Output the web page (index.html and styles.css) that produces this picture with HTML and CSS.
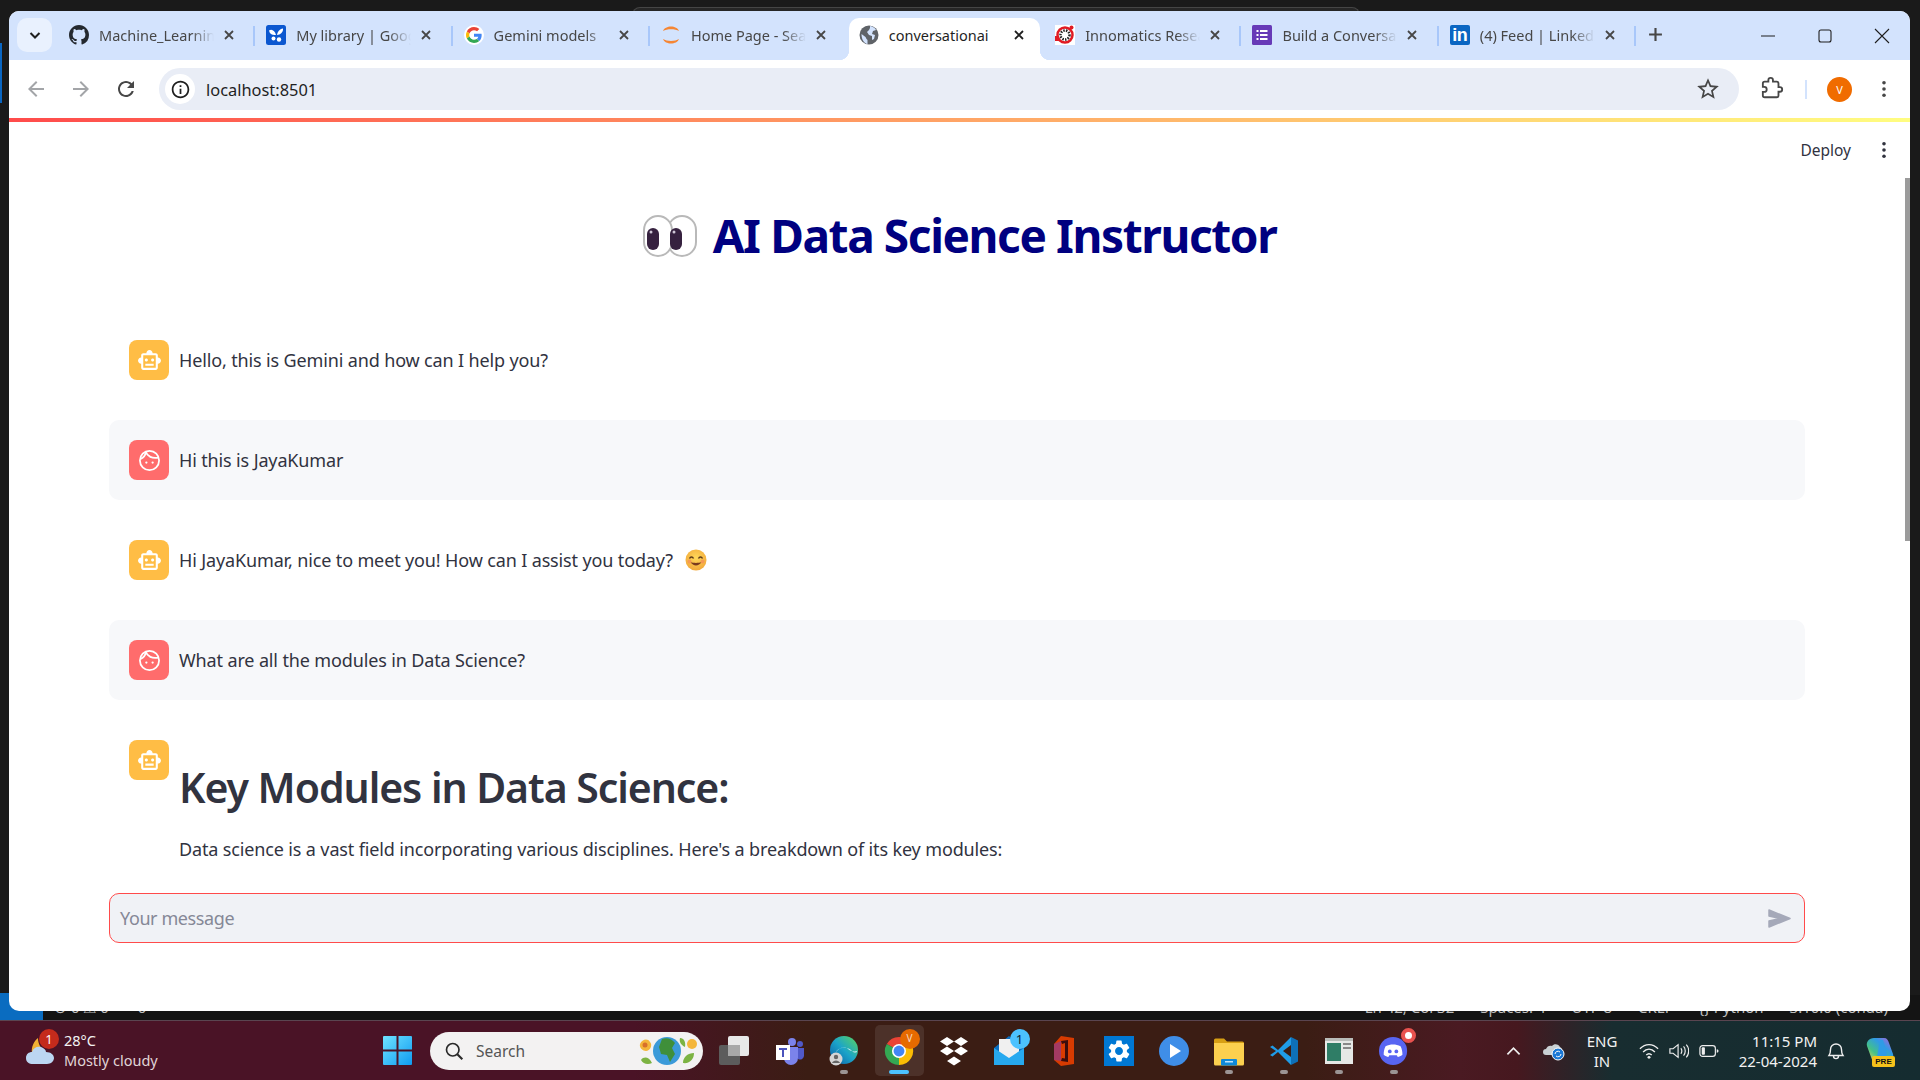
FILE: index.html
```html
<!DOCTYPE html>
<html lang="en">
<head>
<meta charset="utf-8">
<title>conversationai</title>
<link rel="stylesheet" href="styles.css">
</head>
<body>
<div class="desktop">
  <div class="stage">
    <div class="edge-strip"></div>
    <div class="behind-window"></div>
    <div class="status-bar">
      <div class="status-remote"></div>
      <div class="status-left"><span>⊗ 0 ⚠ 0</span><span>⌁ 0</span></div>
      <div class="status-right"><span>Ln 42, Col 32</span><span>Spaces: 4</span><span>UTF-8</span><span>CRLF</span><span>{} Python</span><span>3.10.0 (conda)</span></div>
    </div>
    <div class="window">
      <div class="tabstrip">
        <div class="tab-search"><svg width="14" height="14" viewBox="0 0 14 14"><path d="M2.5 5l4.5 4.5L11.5 5" fill="none" stroke="#1f1f1f" stroke-width="2"/></svg></div>
        <div class="tabs">
          <div class="tab"><svg class="fav" viewBox="0 0 16 16"><path fill="#24292f" d="M8 0C3.58 0 0 3.58 0 8c0 3.54 2.29 6.53 5.47 7.59.4.07.55-.17.55-.38 0-.19-.01-.82-.01-1.49-2.01.37-2.53-.49-2.69-.94-.09-.23-.48-.94-.82-1.13-.28-.15-.68-.52-.01-.53.63-.01 1.08.58 1.23.82.72 1.21 1.87.87 2.33.66.07-.52.28-.87.51-1.07-1.78-.2-3.64-.89-3.64-3.95 0-.87.31-1.59.82-2.15-.08-.2-.36-1.02.08-2.12 0 0 .67-.21 2.2.82.64-.18 1.32-.27 2-.27.68 0 1.36.09 2 .27 1.53-1.04 2.2-.82 2.2-.82.44 1.1.16 1.92.08 2.12.51.56.82 1.27.82 2.15 0 3.07-1.87 3.75-3.65 3.95.29.25.54.73.54 1.48 0 1.07-.01 1.93-.01 2.2 0 .21.15.46.55.38A8.013 8.013 0 0016 8c0-4.42-3.58-8-8-8z"/></svg><span class="tab-title">Machine_Learning</span><svg class="tab-x" viewBox="0 0 12 12"><path d="M2 2l8 8M10 2l-8 8"/></svg></div>
          <div class="tab"><svg class="fav" viewBox="0 0 20 20"><rect width="20" height="20" rx="2.5" fill="#0b57d0"/><path fill="#fff" d="M3 5.500C6 3.500 9 6 10 10 6.500 10.500 3.500 9 3 5.500zM17 3.500c.5 3.500-2.500 6.500-6 6.500.5-3 2.500-6 6-6.500z"/><circle cx="7.5" cy="13.5" r="2" fill="#fff"/><circle cx="13" cy="14.5" r="2.2" fill="#fff"/></svg><span class="tab-title">My library | Google Scholar</span><svg class="tab-x" viewBox="0 0 12 12"><path d="M2 2l8 8M10 2l-8 8"/></svg></div>
          <div class="tab"><svg class="fav" viewBox="-6 -6 60 60"><circle cx="24" cy="24" r="30" fill="#fff"/><path fill="#EA4335" d="M24 9.5c3.54 0 6.71 1.22 9.21 3.6l6.85-6.85C35.9 2.38 30.47 0 24 0 14.62 0 6.51 5.38 2.56 13.22l7.98 6.19C12.43 13.72 17.74 9.5 24 9.5z"/><path fill="#4285F4" d="M46.98 24.55c0-1.57-.15-3.09-.38-4.55H24v9.02h12.94c-.58 2.96-2.26 5.48-4.78 7.18l7.73 6c4.51-4.18 7.09-10.36 7.09-17.65z"/><path fill="#FBBC05" d="M10.53 28.59c-.5-1.45-.78-2.99-.78-4.59s.27-3.14.78-4.59l-7.98-6.19C.92 16.46 0 20.12 0 24c0 3.88.92 7.54 2.56 10.78l7.97-6.19z"/><path fill="#34A853" d="M24 48c6.48 0 11.93-2.13 15.89-5.81l-7.73-6c-2.15 1.45-4.92 2.3-8.16 2.3-6.26 0-11.57-4.22-13.47-9.91l-7.98 6.19C6.51 42.62 14.62 48 24 48z"/></svg><span class="tab-title">Gemini models</span><svg class="tab-x" viewBox="0 0 12 12"><path d="M2 2l8 8M10 2l-8 8"/></svg></div>
          <div class="tab tab-before-active"><svg class="fav" viewBox="0 0 20 20"><path d="M2 6C4 0 16 0 18 6 14 3.500 6 3.500 2 6zM2 14c2 6 14 6 16 0-4 2.500-12 2.500-16 0z" fill="#f58634"/></svg><span class="tab-title">Home Page - Sealion</span><svg class="tab-x" viewBox="0 0 12 12"><path d="M2 2l8 8M10 2l-8 8"/></svg></div>
          <div class="tab tab-active"><svg class="fav" viewBox="0 0 20 20"><circle cx="10" cy="10" r="9.500" fill="#5f6368"/><path d="M11 1c3 .5 5 2 6 4l-3 1-1 3 3 1-1 4-2 1v-4l-3-1-2-3 2-2 1-2zM2.500 9l4 3 1 2 1 1v4c-3-.5-6-4-6-10z" fill="#d3e3fd"/></svg><span class="tab-title tab-title-full">conversationai</span><svg class="tab-x" viewBox="0 0 12 12"><path d="M2 2l8 8M10 2l-8 8"/></svg></div>
          <div class="tab"><svg class="fav" viewBox="0 0 20 20"><rect width="20" height="20" fill="#fff"/><circle cx="10" cy="10" r="7.500" fill="none" stroke="#e01b24" stroke-width="2.500"/><circle cx="10" cy="10" r="4.500" fill="none" stroke="#222" stroke-width="2.500" stroke-dasharray="1.500 1.200"/><circle cx="16.500" cy="2.500" r="2" fill="#e01b24"/><rect y="11" width="4" height="5" fill="#e01b24"/></svg><span class="tab-title">Innomatics Research Labs</span><svg class="tab-x" viewBox="0 0 12 12"><path d="M2 2l8 8M10 2l-8 8"/></svg></div>
          <div class="tab"><svg class="fav" viewBox="0 0 20 20"><rect width="20" height="20" rx="1.500" fill="#673ab7"/><path d="M4.500 5h2v2h-2zM8 5h7.500v2H8zM4.500 9h2v2h-2zM8 9h7.500v2H8zM4.500 13h2v2h-2zM8 13h7.500v2H8z" fill="#fff"/></svg><span class="tab-title">Build a Conversational AI</span><svg class="tab-x" viewBox="0 0 12 12"><path d="M2 2l8 8M10 2l-8 8"/></svg></div>
          <div class="tab"><span class="fav fav-in">in</span><span class="tab-title">(4) Feed | LinkedIn</span><svg class="tab-x" viewBox="0 0 12 12"><path d="M2 2l8 8M10 2l-8 8"/></svg></div>
          <svg class="tab-plus" viewBox="0 0 14 14"><path d="M7 1v12M1 7h12"/></svg>
        </div>
        <div class="win-controls">
          <svg viewBox="0 0 14 14"><path d="M0 7h14"/></svg>
          <svg viewBox="0 0 14 14"><rect x="1" y="1" width="12" height="12" rx="2"/></svg>
          <svg viewBox="0 0 14 14"><path d="M0 0l14 14M14 0L0 14"/></svg>
        </div>
      </div>
      <div class="toolbar">
        <div class="nav-btns">
          <svg viewBox="0 0 24 24"><path fill="#a3a5a8" d="M20 11H7.830l5.590-5.590L12 4l-8 8 8 8 1.410-1.410L7.830 13H20v-2z"/></svg>
          <svg viewBox="0 0 24 24"><path fill="#a3a5a8" d="M12 4l-1.410 1.410L16.170 11H4v2h12.170l-5.580 5.590L12 20l8-8z"/></svg>
          <svg viewBox="0 0 24 24"><path fill="#474747" d="M17.650 6.350C16.200 4.900 14.210 4 12 4c-4.420 0-7.990 3.580-7.990 8s3.570 8 7.990 8c3.730 0 6.840-2.550 7.730-6h-2.080c-.82 2.330-3.040 4-5.650 4-3.310 0-6-2.690-6-6s2.690-6 6-6c1.660 0 3.140.69 4.220 1.780L13 11h7V4l-2.350 2.350z"/></svg>
        </div>
        <div class="omnibox">
          <div class="site-info"><svg viewBox="0 0 24 24" width="21" height="21"><path fill="#1f1f1f" d="M11 7h2v2h-2zm0 4h2v6h-2zm1-9C6.480 2 2 6.480 2 12s4.480 10 10 10 10-4.480 10-10S17.520 2 12 2zm0 18c-4.410 0-8-3.590-8-8s3.590-8 8-8 8 3.590 8 8-3.590 8-8 8z"/></svg></div>
          <span class="url">localhost:8501</span>
          <svg class="star" viewBox="0 0 24 24"><path fill="#474747" d="M22 9.240l-7.190-.62L12 2 9.190 8.630 2 9.240l5.460 4.730L5.820 21 12 17.270 18.180 21l-1.630-7.030L22 9.240zM12 15.400l-3.760 2.270 1-4.280-3.320-2.880 4.380-.38L12 6.100l1.710 4.040 4.380.38-3.320 2.880 1 4.280L12 15.400z"/></svg>
        </div>
        <svg class="puzzle" viewBox="0 0 24 24"><path fill="none" stroke="#474747" stroke-width="2" d="M20.500 11H19V7c0-1.100-.9-2-2-2h-4V3.500C13 2.120 11.880 1 10.500 1S8 2.120 8 3.500V5H4c-1.100 0-1.990.9-1.990 2v3.800H3.500c1.490 0 2.700 1.210 2.700 2.700s-1.210 2.700-2.700 2.700H2V20c0 1.100.9 2 2 2h13c1.100 0 2-.9 2-2v-4h1.500c1.380 0 2.500-1.120 2.500-2.500S21.880 11 20.500 11z" transform="translate(1 0) scale(.92)"/></svg>
        <div class="tool-sep"></div>
        <div class="profile">v</div>
        <svg class="kebab" viewBox="0 0 4 20"><circle cx="2" cy="3" r="2"/><circle cx="2" cy="10" r="2"/><circle cx="2" cy="17" r="2"/></svg>
      </div>
      <div class="decoration"></div>
      <main class="page">
        <div class="scroll-thumb"></div>
        <div class="app-bar"><span class="deploy">Deploy</span><svg class="kebab kebab-page" viewBox="0 0 4 20"><circle cx="2" cy="3" r="2"/><circle cx="2" cy="10" r="2"/><circle cx="2" cy="17" r="2"/></svg></div>
        <h1 class="title"><svg class="eyes" viewBox="0 0 54 42"><rect x="25" y="1" width="28" height="40" rx="14" fill="#fff" stroke="#b9b9b9" stroke-width="2"/><rect x="1" y="1" width="28" height="40" rx="14" fill="#fff" stroke="#b9b9b9" stroke-width="2"/><rect x="4" y="13" width="12" height="22" rx="6" fill="#36213f"/><rect x="27" y="13" width="12" height="22" rx="6" fill="#36213f"/><circle cx="8" cy="17" r="1.500" fill="#cfc7d6"/><circle cx="31" cy="17" r="1.500" fill="#cfc7d6"/></svg><span>AI Data Science Instructor</span></h1>
        <section class="chat">
          <div class="msg"><div class="avatar avatar-bot"><svg viewBox="0 0 24 24"><path d="M20 9V7c0-1.100-.9-2-2-2h-3c0-1.660-1.340-3-3-3S9 3.340 9 5H6c-1.100 0-2 .9-2 2v2c-1.660 0-3 1.340-3 3s1.340 3 3 3v4c0 1.100.9 2 2 2h12c1.100 0 2-.9 2-2v-4c1.660 0 3-1.340 3-3s-1.340-3-3-3zm-2 10H6V7h12v12zm-9-6c-.83 0-1.500-.67-1.500-1.500S8.170 10 9 10s1.500.67 1.500 1.500S9.830 13 9 13zm7.500-1.500c0 .83-.67 1.500-1.500 1.500s-1.500-.67-1.500-1.500.67-1.500 1.500-1.500 1.500.67 1.500 1.500zM8 15h8v2H8v-2z"/></svg></div><p class="msg-text">Hello, this is Gemini and how can I help you?</p></div>
          <div class="msg msg-user"><div class="avatar avatar-user"><svg viewBox="0 0 24 24"><circle cx="12" cy="12" r="9.200" class="face-line"/><path class="face-line" d="M8.500 3.800c1.500 4.200 6 6.700 12 5.400M3.500 10.500c2.500-1 4.500-3.300 5-6.500"/><circle cx="9" cy="14" r="1.100"/><circle cx="15" cy="14" r="1.100"/></svg></div><p class="msg-text">Hi this is JayaKumar</p></div>
          <div class="msg"><div class="avatar avatar-bot"><svg viewBox="0 0 24 24"><path d="M20 9V7c0-1.100-.9-2-2-2h-3c0-1.660-1.340-3-3-3S9 3.340 9 5H6c-1.100 0-2 .9-2 2v2c-1.660 0-3 1.340-3 3s1.340 3 3 3v4c0 1.100.9 2 2 2h12c1.100 0 2-.9 2-2v-4c1.660 0 3-1.340 3-3s-1.340-3-3-3zm-2 10H6V7h12v12zm-9-6c-.83 0-1.500-.67-1.500-1.500S8.170 10 9 10s1.500.67 1.500 1.500S9.830 13 9 13zm7.500-1.500c0 .83-.67 1.500-1.500 1.500s-1.500-.67-1.500-1.500.67-1.500 1.500-1.500 1.500.67 1.500 1.500zM8 15h8v2H8v-2z"/></svg></div><p class="msg-text">Hi JayaKumar, nice to meet you! How can I assist you today?<svg class="smile" viewBox="0 0 22 22"><defs><radialGradient id="sm" cx=".5" cy=".4" r=".6"><stop offset="0" stop-color="#ffd95a"/><stop offset="1" stop-color="#f2a93b"/></radialGradient></defs><circle cx="11" cy="11" r="10.500" fill="url(#sm)"/><path d="M4.500 9.500c1-2 3-2 4 0M13.500 9.500c1-2 3-2 4 0" fill="none" stroke="#5b3a1a" stroke-width="1.500"/><path d="M5.500 13c2.500 4.500 8.500 4.500 11 0-3 1.200-8 1.200-11 0z" fill="#7a3b1e"/><circle cx="4.500" cy="12.500" r="2" fill="#f58c5a" opacity=".7"/><circle cx="17.500" cy="12.500" r="2" fill="#f58c5a" opacity=".7"/></svg></p></div>
          <div class="msg msg-user"><div class="avatar avatar-user"><svg viewBox="0 0 24 24"><circle cx="12" cy="12" r="9.200" class="face-line"/><path class="face-line" d="M8.500 3.800c1.500 4.200 6 6.700 12 5.400M3.500 10.500c2.500-1 4.500-3.300 5-6.500"/><circle cx="9" cy="14" r="1.100"/><circle cx="15" cy="14" r="1.100"/></svg></div><p class="msg-text">What are all the modules in Data Science?</p></div>
          <div class="msg msg-long"><div class="avatar avatar-bot"><svg viewBox="0 0 24 24"><path d="M20 9V7c0-1.100-.9-2-2-2h-3c0-1.660-1.340-3-3-3S9 3.340 9 5H6c-1.100 0-2 .9-2 2v2c-1.660 0-3 1.340-3 3s1.340 3 3 3v4c0 1.100.9 2 2 2h12c1.100 0 2-.9 2-2v-4c1.660 0 3-1.340 3-3s-1.340-3-3-3zm-2 10H6V7h12v12zm-9-6c-.83 0-1.500-.67-1.500-1.500S8.170 10 9 10s1.500.67 1.500 1.500S9.830 13 9 13zm7.500-1.500c0 .83-.67 1.500-1.500 1.500s-1.500-.67-1.500-1.500.67-1.500 1.500-1.500 1.500.67 1.500 1.500zM8 15h8v2H8v-2z"/></svg></div><div class="answer"><h2>Key Modules in Data Science:</h2><p class="msg-text">Data science is a vast field incorporating various disciplines. Here's a breakdown of its key modules:</p></div></div>
        </section>
        <div class="chat-input"><span class="placeholder">Your message</span><svg class="send" viewBox="0 0 23 19"><path fill="#a5a9b9" stroke="#a5a9b9" stroke-width="1.500" stroke-linejoin="round" d="M1 1l21 8.500L1 18v-6l11-2.500L1 7z"/></svg></div>
      </main>
    </div>
  </div>
  <footer class="taskbar">
    <div class="weather">
      <svg class="weather-icon" viewBox="0 0 30 30"><path d="M13 2c-4 3-7 9-6 15l13-3c-4-1-7-6-7-12z" fill="#f2b134"/><path d="M8 28c-4 0-7-2-7-6s3-6 6-6c1-4 5-6 9-5 3 1 5 3 5 5 5 0 8 3 8 6s-3 6-7 6z" fill="#bcd6f2"/></svg>
      <span class="weather-badge">1</span>
      <div class="weather-text"><span class="temp">28°C</span><span class="cond">Mostly cloudy</span></div>
    </div>
    <div class="start"><svg viewBox="0 0 29 29"><defs><linearGradient id="wg" x1="0" y1="0" x2="1" y2="1"><stop offset="0" stop-color="#6fe3ff"/><stop offset="1" stop-color="#0f9bf0"/></linearGradient></defs><path fill="url(#wg)" d="M0 1a1 1 0 011-1h12.500v13.500H0zM15.500 0H28a1 1 0 011 1v12.500H15.500zM0 15.500h13.500V29H1a1 1 0 01-1-1zM15.500 15.500H29V28a1 1 0 01-1 1H15.500z"/></svg></div>
    <div class="search"><svg class="search-icon" viewBox="0 0 24 24"><circle cx="10.500" cy="10.500" r="7.500" fill="none" stroke="#2a2a2a" stroke-width="2"/><path d="M16 16l6 6" stroke="#2a2a2a" stroke-width="2.500"/></svg><span class="search-label">Search</span>
      <svg class="globe" viewBox="0 0 60 38"><circle cx="29" cy="19" r="14" fill="#3b9ad9"/><path d="M24 7c5-2 10 0 13 4l-3 5 3 6-5 8-3-7-6-1-2-7z" fill="#3f8f3a"/><path d="M2 12c2-5 8-6 10-2 3 3 0 9-4 9-3 0-7-3-6-7z" fill="#f4b63a"/><circle cx="7" cy="13" r="2.500" fill="#d8702a"/><circle cx="54" cy="12" r="5" fill="#f4b63a"/><path d="M3 28c3-4 8-3 11 3-4 2-9 1-11-3zM45 31c0-6 5-10 11-10 0 6-4 11-11 10zM42 6c4 0 6 4 5 9-4-2-6-5-5-9z" fill="#7cb342"/></svg>
    </div>
    <div class="apps">
      <div class="app"><svg viewBox="0 0 30 30"><rect x="0" y="9" width="21" height="20" rx="2" fill="#5c5c5c"/><rect x="9" y="0" width="21" height="20" rx="2" fill="#e8e8e8"/><rect x="9" y="9" width="12" height="11" fill="#a8a8a8"/></svg></div>
      <div class="app"><svg viewBox="0 0 30 30"><circle cx="18" cy="6" r="4" fill="#7b83eb"/><circle cx="26" cy="8" r="3" fill="#5059c9"/><path d="M10 11h14v11a7 7 0 01-14 0z" fill="#7b83eb"/><path d="M24 12h6v8a4 4 0 01-6 3z" fill="#5059c9"/><rect x="2" y="9" width="14" height="15" fill="#fff"/><path d="M5 12h8v2H10v7H8v-7H5z" fill="#4b53bc"/></svg></div>
      <div class="app"><svg viewBox="0 0 30 30"><defs><linearGradient id="eg" x1="0" y1="1" x2="1" y2="0"><stop offset="0" stop-color="#0c59a4"/><stop offset=".5" stop-color="#1ba4c9"/><stop offset="1" stop-color="#5cd65c"/></linearGradient></defs><circle cx="15" cy="14" r="14" fill="url(#eg)"/><path d="M7 16c2-5 12-6 16-1 2 2 5 2 5 0-3 1-7 0-9-2-4-3-9-1-12 3z" fill="#c7ecf4"/><circle cx="7" cy="23" r="6.500" fill="#d5d5d5"/><circle cx="7" cy="21" r="2.200" fill="#666"/><path d="M3 27c1-3.500 7-3.500 8 0z" fill="#666"/></svg><span class="dot"></span></div>
      <div class="app app-active"><svg viewBox="0 0 32 32"><path d="M16 16L3 8.500A15 15 0 0129 8.500z" fill="#ea4335"/><path d="M16 16L29 8.500A15 15 0 0116 31z" fill="#fbbc04"/><path d="M16 16L16 31A15 15 0 013 8.500z" fill="#34a853"/><circle cx="16" cy="16" r="7.500" fill="#fff"/><circle cx="16" cy="16" r="5.800" fill="#4285f4"/></svg><span class="chrome-badge">v</span><span class="active-bar"></span></div>
      <div class="app"><svg viewBox="0 0 30 30"><path fill="#fff" d="M8 1l7 4.500-7 4.500-7-4.500zM22 1l7 4.500-7 4.500-7-4.500zM8 10.500l7 4.500-7 4.500-7-4.500zM22 10.500l7 4.500-7 4.500-7-4.500zM15 20.500l7 4.500-7 4.500-7-4.500z"/></svg></div>
      <div class="app"><svg viewBox="0 0 30 30"><path d="M0 12L15 0l15 12v17H0z" fill="#0a6fc2"/><path d="M5 3h20v14l-10 6-10-6z" fill="#f0f0f0"/><path d="M0 12l15 10 15-10v17H0z" fill="#27a9ef"/></svg><span class="mail-badge">1</span></div>
      <div class="app"><svg viewBox="0 0 22 30"><path d="M8 0l13 2v26L8 30 1 24V8z" fill="#d83b01"/><path d="M8 5l7-1v22l-7-1 1-3 3 .5V7L9 8z" fill="#3b0d0d"/><path d="M1 8l7-3v20l-7-1z" fill="#a33a63"/></svg></div>
      <div class="app"><svg viewBox="0 0 30 30"><rect width="30" height="30" fill="#0078d4"/><path transform="translate(1.800 1.800) scale(1.100)" fill="#fff" d="M19.140 12.940c.04-.3.06-.61.06-.94 0-.32-.02-.64-.07-.94l2.030-1.580c.18-.14.23-.41.12-.61l-1.920-3.320c-.12-.22-.37-.29-.59-.22l-2.390.96c-.5-.38-1.030-.7-1.620-.94l-.36-2.540c-.04-.24-.24-.41-.48-.41h-3.840c-.24 0-.43.17-.47.41l-.36 2.540c-.59.24-1.130.57-1.620.94l-2.390-.96c-.22-.08-.47 0-.59.22L2.740 8.870c-.12.21-.08.47.12.61l2.030 1.580c-.05.3-.09.63-.09.94s.02.64.07.94l-2.030 1.580c-.18.14-.23.41-.12.61l1.920 3.320c.12.22.37.29.59.22l2.390-.96c.5.38 1.030.7 1.620.94l.36 2.540c.05.24.24.41.48.41h3.840c.24 0 .44-.17.47-.41l.36-2.540c.59-.24 1.130-.56 1.620-.94l2.390.96c.22.08.47 0 .59-.22l1.920-3.320c.12-.22.07-.47-.12-.61l-2.010-1.580zM12 15.600c-1.980 0-3.600-1.620-3.600-3.600s1.620-3.600 3.600-3.600 3.600 1.620 3.600 3.600-1.620 3.600-3.600 3.600z"/></svg></div>
      <div class="app"><svg viewBox="0 0 30 30"><circle cx="15" cy="15" r="15" fill="#3f8ee8"/><path d="M11 8l11 7-11 7z" fill="#fff"/></svg></div>
      <div class="app"><svg viewBox="0 0 30 30"><path d="M0 4a1.500 1.500 0 011.500-1.500H10l3 3h15.500A1.500 1.500 0 0130 7v6H0z" fill="#d79f14"/><path d="M0 7h30v21a1.500 1.500 0 01-1.500 1.500H1.500A1.500 1.500 0 010 28z" fill="#fcd04f"/><rect x="7" y="23" width="16" height="6.500" rx="1" fill="#0f88d9"/><rect x="11" y="25" width="8" height="1.500" fill="#bfe3fb"/></svg><span class="dot"></span></div>
      <div class="app"><svg viewBox="0 0 30 30"><path d="M22 1l7 3.500v21L22 29z" fill="#0e70b8"/><path d="M22 1L9 14l-5.500-4.500L1 11l6 4-6 4 2.500 1.500L9 16l13 13V21l-8-6 8-6z" fill="#1f9ce8"/></svg><span class="dot"></span></div>
      <div class="app"><svg viewBox="0 0 28 30"><rect y="2" width="28" height="26" fill="#e6e8e6"/><rect y="2" width="28" height="3" fill="#b9bcb9"/><rect x="2" y="7" width="14" height="18" fill="#2f7d66"/><rect x="18" y="7" width="8" height="2" fill="#888"/><rect x="18" y="11" width="8" height="2" fill="#888"/></svg><span class="dot"></span></div>
      <div class="app"><svg viewBox="0 0 32 30"><circle cx="15" cy="15" r="15" fill="#5865f2"/><path d="M7 10c5-2.500 11-2.500 16 0 1.500 3 2 6 2 9-2 1.500-3.500 2-5 2.500l-1-2h-8l-1 2c-1.500-.5-3-1-5-2.500 0-3 .5-6 2-9z" fill="#fff"/><circle cx="11.500" cy="15.500" r="2" fill="#5865f2"/><circle cx="18.500" cy="15.500" r="2" fill="#5865f2"/></svg><span class="discord-badge"></span><span class="dot"></span></div>
    </div>
    <div class="tray">
      <svg class="tray-chevron" viewBox="0 0 16 10"><path d="M1.500 8.500L8 2l6.500 6.500" fill="none" stroke="#eee" stroke-width="1.800"/></svg>
      <svg class="tray-drive" viewBox="0 0 22 20"><path d="M3 14a3 3 0 010-6c1-3 4-4 6-3 2-3 7-2 8 1 2 1 3 3 2 5v3z" fill="#c9d0d4"/><circle cx="15" cy="13" r="6" fill="#1b78d6" stroke="#fff" stroke-width="1"/><path d="M12 13a3 3 0 015-2M18 13a3 3 0 01-5 2" stroke="#fff" fill="none"/></svg>
      <div class="tray-two tray-lang"><span>ENG</span><span>IN</span></div>
      <svg class="tray-ic" viewBox="0 0 22 18"><path d="M1 6.500c6-6 14-6 20 0M4.500 10c4-4 9-4 13 0M8 13.500c2-2 4-2 6 0" fill="none" stroke="#eee" stroke-width="1.500"/><circle cx="11" cy="16" r="1.600" fill="#eee"/></svg>
      <svg class="tray-ic" viewBox="0 0 22 18"><path d="M1 6.500h3.500L10 2v14l-5.500-4.500H1zM13 6c1.500 1.500 1.500 4.500 0 6M16 4c2.500 2.500 2.500 7.500 0 10M19 2c3.500 3.500 3.500 10.500 0 14" fill="none" stroke="#eee" stroke-width="1.300"/></svg>
      <svg class="tray-ic" viewBox="0 0 22 14"><rect x="1" y="1" width="17" height="12" rx="3" fill="none" stroke="#eee" stroke-width="1.300"/><rect x="3" y="3" width="3.500" height="8" rx="1" fill="#eee"/><path d="M19.500 5a2 2 0 010 4z" fill="#eee"/></svg>
      <div class="tray-two tray-clock"><span>11:15 PM</span><span>22-04-2024</span></div>
      <svg class="tray-bell" viewBox="0 0 18 20"><path d="M2 14.500c1.500-2 1.500-3.500 1.500-6a5.500 5.500 0 0111 0c0 2.500 0 4 1.500 6zM6.500 15c0 3.500 5 3.500 5 0" fill="none" stroke="#eee" stroke-width="1.400"/></svg>
      <div class="copilot"><svg viewBox="0 0 28 28"><defs><linearGradient id="cp" x1="0" y1="1" x2="1" y2="0"><stop offset="0" stop-color="#f6d64a"/><stop offset=".35" stop-color="#43c08a"/><stop offset=".65" stop-color="#2f9be6"/><stop offset="1" stop-color="#c45ad4"/></linearGradient></defs><path d="M8 1h10c3 0 4 2 5 5l4 11c1 4-1 8-5 8H10c-3 0-4-2-5-5L1 9C0 5 3 1 8 1z" fill="url(#cp)"/><path d="M17 3l4 14c0 2-2 3-4 3h-6l3-17z" fill="#2f9be6"/></svg><span class="pre">PRE</span></div>
    </div>
  </footer>
</div>
</body>
</html>
```
FILE: styles.css
```css
* { box-sizing: border-box; }
html, body { margin: 0; padding: 0; height: 100%; }
body { font-family: "Noto Sans", "Open Sans", sans-serif; overflow: hidden; background: #1c1c1c; }
svg { display: block; flex: none; }
p, h1, h2 { margin: 0; }

.desktop { width: 1920px; height: 1080px; display: flex; flex-direction: column; background: #1c1c1c; overflow: hidden; }
.stage { position: relative; height: 1020px; flex: none; background: #1a1a1a; }
.edge-strip { position: absolute; left: 0; top: 43px; width: 2px; height: 60px; background: #0a66c2; }
.behind-window { position: absolute; left: 632px; top: 7px; width: 728px; height: 8px; border: 1px solid #454545; border-bottom: 0; border-radius: 8px 8px 0 0; background: #262626; }

.status-bar { position: absolute; left: 0; right: 0; bottom: 0; height: 25px; background: #141414; display: flex; align-items: flex-end; font-size: 15px; color: #bdbdbd; line-height: 22px; padding-bottom: 2px; }
.status-remote { position: absolute; left: 0; top: -2px; bottom: 0; width: 43px; background: #0a6cc0; }
.status-left { display: flex; gap: 16px; margin-left: 54px; }
.status-right { display: flex; gap: 26px; margin-left: auto; margin-right: 32px; }

.window { position: absolute; left: 9px; top: 11px; width: 1901px; height: 1000px; background: #fff; border-radius: 10px; overflow: hidden; display: flex; flex-direction: column; }

.tabstrip { height: 49px; flex: none; background: #d3e3fd; display: flex; position: relative; padding: 7px 0 0 8px; }
.tab-search { width: 35px; height: 34px; background: #e9f1fe; border-radius: 10px; display: flex; align-items: center; justify-content: center; flex: none; margin-right: 7px; }
.tabs { display: flex; height: 42px; align-items: flex-start; }
.tab { width: 197.3px; height: 42px; padding: 0 0 9px 10px; display: flex; align-items: center; position: relative; flex: none; color: #474747; font-size: 14.5px; }
.tab::after { content: ""; position: absolute; right: 1px; top: 8px; width: 2px; height: 20px; background: #a8c7fa; }
.tab-active::after, .tab-before-active::after { display: none; }
.tab-active { background: #fff; border-radius: 10px 10px 0 0; color: #1f1f1f; width: 191px; margin: 0 5.5px 0 .5px; padding-left: 10px; }
.tab-active::before { content: ""; position: absolute; left: -10px; bottom: 0; width: 10px; height: 10px; background: radial-gradient(circle at 0 0, transparent 10px, #fff 10.5px); }
.tab-active::after { display: block; left: auto; right: -10px; top: auto; bottom: 0; width: 10px; height: 10px; background: radial-gradient(circle at 100% 0, transparent 10px, #fff 10.5px); }
.fav { width: 20px; height: 20px; flex: none; }
.fav-in { background: #0a66c2; color: #fff; border-radius: 2px; font: 700 18px/20px "Liberation Sans", sans-serif; text-align: center; letter-spacing: -0.5px; }
.tab-title { width: 115px; margin-left: 10px; white-space: nowrap; overflow: hidden; flex: none; -webkit-mask-image: linear-gradient(90deg, #000 80%, transparent 100%); mask-image: linear-gradient(90deg, #000 80%, transparent 100%); }
.tab-title-full { -webkit-mask-image: none; mask-image: none; }
.tab-x { width: 12px; height: 12px; flex: none; margin-left: 9px; fill: none; stroke: #474747; stroke-width: 1.8; }
.tab-active .tab-x { stroke: #1f1f1f; margin-left: 9px; }
.tab-plus { width: 15px; height: 15px; margin: 9px 0 0 11px; fill: none; stroke: #474747; stroke-width: 2; flex: none; }
.win-controls { position: absolute; right: 0; top: 0; height: 49px; display: flex; align-items: center; padding-right: 21px; gap: 43px; fill: none; stroke: #1f1f1f; stroke-width: 1.1; }
.win-controls svg { width: 14px; height: 14px; overflow: visible; }

.toolbar { height: 58px; flex: none; background: #fff; border-radius: 10px 10px 0 0; display: flex; align-items: center; position: relative; }
.nav-btns { display: flex; gap: 21px; padding-left: 15px; width: 150px; }
.nav-btns svg { width: 24px; height: 24px; }
.omnibox { width: 1580px; height: 42px; background: #e9edf6; border-radius: 21px; display: flex; align-items: center; padding: 0 18px 0 6px; flex: none; }
.site-info { width: 30px; height: 30px; background: #fff; border-radius: 50%; display: flex; align-items: center; justify-content: center; flex: none; }
.url { margin-left: 11px; font-size: 16.4px; color: #1f1f1f; flex: 1; }
.star { width: 26px; height: 26px; }
.puzzle { width: 24px; height: 24px; margin-left: 21px; }
.tool-sep { width: 2px; height: 19px; background: #d3e3fd; margin-left: 21px; }
.profile { width: 25px; height: 25px; background: #f06c00; border-radius: 50%; color: #fff; font-size: 11px; display: flex; align-items: center; justify-content: center; margin-left: 20px; text-transform: uppercase; }
.kebab { width: 4px; height: 18px; fill: #474747; }
.toolbar .kebab { margin-left: 30px; }
.kebab-page { fill: #31333f; margin-left: 31px; }

.decoration { height: 4px; flex: none; background: linear-gradient(90deg, #ff4b4b, #fffd80); }

.page { flex: 1; position: relative; display: flex; flex-direction: column; color: #31333f; min-height: 0; }
.scroll-thumb { position: absolute; right: 0; top: 56px; width: 5px; height: 363px; background: #9b9b9b; }
.app-bar { height: 56px; flex: none; display: flex; align-items: center; justify-content: flex-end; padding-right: 24px; }
.deploy { font-size: 15.5px; }
.title { height: 142px; flex: none; display: flex; justify-content: center; align-items: flex-start; padding-top: 26px; color: #000080; font-size: 46px; font-weight: 700; line-height: 62px; gap: 16px; letter-spacing: -1.4px; }
.eyes { width: 54px; height: 42px; margin-top: 11px; }
.chat { height: 560px; flex: none; overflow: hidden; padding: 0 105px 0 100px; display: flex; flex-direction: column; gap: 20px; }
.msg { display: flex; gap: 10px; padding: 20px; height: 80px; border-radius: 10px; align-items: center; flex: none; }
.msg-user { background: #f7f8fa; }
.msg-long { height: auto; align-items: flex-start; }
.avatar { width: 40px; height: 40px; border-radius: 8px; display: flex; align-items: center; justify-content: center; flex: none; fill: #fff; }
.avatar svg { width: 25px; height: 25px; }
.face-line { fill: none; stroke: #fff; stroke-width: 1.700; }
.avatar-bot { background: #ffbd45; }
.avatar-user { background: #ff6c6c; }
.msg-text { font-size: 18px; line-height: 28px; letter-spacing: -0.14px; display: flex; align-items: center; gap: 12px; }
.smile { width: 22px; height: 22px; }
.answer { padding-top: 18px; }
.answer h2 { font-size: 41px; font-weight: 600; line-height: 58px; margin-bottom: 19px; letter-spacing: -1.05px; }
.chat-input { height: 50px; flex: none; margin: 13px 105px 0 100px; background: #f0f2f6; border: 1px solid #ff4b4b; border-radius: 10px; display: flex; align-items: center; justify-content: space-between; padding: 0 13px 0 10px; }
.placeholder { font-size: 18px; letter-spacing: -0.4px; color: #858896; }
.send { width: 23px; height: 19px; }

.taskbar { height: 60px; flex: none; display: flex; align-items: center; border-top: 1px solid #5a4550; background: linear-gradient(90deg, #4a1326 0, #4a1326 33%, #3b1d14 42%, #3b1d14 68%, #4a1a22 76%, #46181f 79%, #182d30 84%, #152c30 100%); color: #f2f2f2; position: relative; }
.weather { width: 372px; height: 100%; display: flex; align-items: center; padding-left: 25px; position: relative; flex: none; }
.weather-icon { width: 30px; height: 30px; }
.weather-badge { position: absolute; left: 39px; top: 8px; width: 20px; height: 20px; border-radius: 50%; background: #c42b1c; color: #fff; font-size: 13px; line-height: 20px; text-align: center; }
.weather-text { display: flex; flex-direction: column; margin: -2px 0 0 9px; font-size: 14.5px; line-height: 20px; }
.cond { color: #e0d5d8; }
.start { width: 50px; display: flex; justify-content: center; flex: none; }
.start svg { width: 29px; height: 29px; }
.search { width: 273px; height: 38px; margin-left: 8px; border-radius: 19px; background: #f3f2f2; display: flex; align-items: center; padding-left: 14px; flex: none; position: relative; }
.search-icon { width: 20px; height: 20px; }
.search-label { margin-left: 12px; color: #555; font-size: 15.5px; flex: 1; }
.globe { width: 60px; height: 38px; margin-right: 5px; }
.apps { display: flex; margin-left: 3.5px; flex: none; }
.app { width: 55px; height: 59px; display: flex; align-items: center; justify-content: center; position: relative; flex: none; }
.app svg { width: 30px; height: 30px; position: relative; }
.app-active::before { content: ""; position: absolute; left: 3px; right: 3px; top: 4px; bottom: 4px; background: rgba(255,255,255,.09); border-radius: 5px; }
.dot { position: absolute; left: 23.5px; bottom: 6px; width: 8px; height: 4px; border-radius: 2px; background: #9b9494; }
.active-bar { position: absolute; left: 17.5px; bottom: 6px; width: 20px; height: 4px; border-radius: 2px; background: #4cc2ff; }
.chrome-badge { position: absolute; left: 28px; top: 8px; width: 20px; height: 20px; border-radius: 50%; background: #e66a00; color: #f7dcc0; font-size: 10px; line-height: 19px; text-align: center; text-transform: uppercase; }
.mail-badge { position: absolute; left: 28px; top: 8px; width: 20px; height: 20px; border-radius: 50%; background: #4cc2ff; color: #10222c; font-size: 13px; line-height: 20px; text-align: center; }
.discord-badge { position: absolute; left: 34px; top: 7px; width: 15px; height: 15px; border-radius: 50%; background: #fff; border: 4px solid #e9524f; }
.tray { margin-left: auto; display: flex; align-items: center; padding-right: 15px; height: 100%; }
.tray-chevron { width: 15px; height: 10px; margin-right: 22px; }
.tray-drive { width: 22px; height: 20px; margin-right: 12px; }
.tray-two { display: flex; flex-direction: column; font-size: 15px; line-height: 20px; flex: none; }
.tray-lang { width: 50px; align-items: center; margin-right: 7px; }
.tray-ic { width: 20px; height: 18px; margin: 0 5px; }
.tray-clock { width: 93px; align-items: flex-end; margin-left: 0; }
.tray-bell { width: 18px; height: 20px; margin: 0 10px; }
.copilot { width: 50px; position: relative; display: flex; justify-content: center; }
.copilot svg { width: 28px; height: 28px; }
.pre { position: absolute; left: 17px; top: 19px; width: 23px; height: 11px; background: #f6c21b; color: #111; font: 700 8px/11px "Liberation Sans", sans-serif; text-align: center; border-radius: 2px; }
```
